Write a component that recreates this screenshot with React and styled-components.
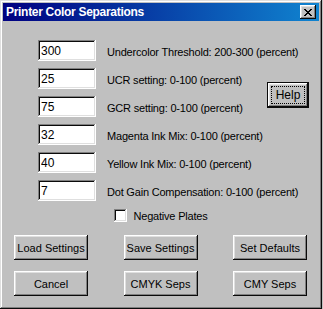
import React from 'react'
import styled, { createGlobalStyle } from 'styled-components'

const GlobalStyle = createGlobalStyle`
  html, body {
    margin: 0;
    padding: 0;
    background: #c0c0c0;
  }
  body {
    font-family: "Liberation Sans", Arial, sans-serif;
    font-size: 11px;
    letter-spacing: -0.2px;
    color: #000;
  }
`

const Window = styled.div`
  box-sizing: border-box;
  width: 322px;
  height: 309px;
  padding: 3px;
  background: #c0c0c0;
  box-shadow: inset -1px -1px #0a0a0a, inset 1px 1px #dfdfdf,
    inset -2px -2px #808080, inset 2px 2px #fff;
  display: flex;
  flex-direction: column;
`

const TitleBar = styled.div`
  height: 18px;
  display: flex;
  align-items: center;
  justify-content: space-between;
  padding: 0 3px 0 3px;
  background: linear-gradient(90deg, #000080, #1084d0);
`

const Title = styled.span`
  color: #fff;
  font-weight: bold;
  font-size: 12px;
  letter-spacing: -0.3px;
`

const CloseButton = styled.button`
  box-sizing: border-box;
  width: 16px;
  height: 14px;
  padding: 0;
  border: 0;
  background: #c0c0c0;
  box-shadow: inset -1px -1px #0a0a0a, inset 1px 1px #fff,
    inset -2px -2px #808080, inset 2px 2px #dfdfdf;
  display: flex;
  align-items: center;
  justify-content: center;
`

const Body = styled.div`
  flex: 1;
  display: flex;
  flex-direction: column;
  padding: 19px 0 0 35px;
`

const FieldGrid = styled.div`
  display: grid;
  grid-template-columns: 58px auto 1fr;
  grid-auto-rows: 21px;
  column-gap: 11px;
  row-gap: 7px;
  align-items: center;
`

const Field = styled.input`
  box-sizing: border-box;
  width: 58px;
  height: 21px;
  padding: 3px 3px 2px;
  border: 0;
  outline: none;
  background: #fff;
  font: inherit;
  font-size: 12px;
  letter-spacing: 0;
  color: #000;
  box-shadow: inset -1px -1px #fff, inset 1px 1px #808080,
    inset -2px -2px #dfdfdf, inset 2px 2px #0a0a0a;
`

const Label = styled.span`
  white-space: nowrap;
  grid-column: ${p => (p.$wide ? '2 / 4' : '2')};
  padding-top: 2px;
`

const HelpCell = styled.div`
  grid-column: 3;
  grid-row: 2 / 4;
  display: flex;
  justify-content: flex-end;
  align-items: center;
  padding: 4px 10px 0 0;
`

const Button = styled.button`
  box-sizing: border-box;
  width: ${p => p.$w || 74}px;
  height: ${p => p.$h || 25}px;
  padding: 0;
  border: 0;
  background: #c0c0c0;
  font: inherit;
  color: #000;
  white-space: nowrap;
  box-shadow: inset -1px -1px #0a0a0a, inset 1px 1px #fff,
    inset -2px -2px #808080, inset 2px 2px #dfdfdf;
`

const DefaultButton = styled(Button)`
  box-shadow: inset -1px -1px #0a0a0a, inset 1px 1px #0a0a0a,
    inset -2px -2px #0a0a0a, inset 2px 2px #fff,
    inset -3px -3px #808080, inset 3px 3px #dfdfdf;
  display: flex;
  align-items: center;
  justify-content: center;
  font-size: 12px;
`

const FocusRing = styled.span`
  box-sizing: border-box;
  width: 34px;
  height: 18px;
  display: flex;
  align-items: center;
  justify-content: center;
  border: 1px dotted #000;
`

const CheckRow = styled.label`
  display: flex;
  justify-content: center;
  align-items: center;
  gap: 6px;
  margin: 8px 0 0 -35px;
`

const CheckBox = styled.span`
  box-sizing: border-box;
  width: 13px;
  height: 13px;
  background: #fff;
  box-shadow: inset -1px -1px #fff, inset 1px 1px #808080,
    inset -2px -2px #dfdfdf, inset 2px 2px #0a0a0a;
`

const ButtonGrid = styled.div`
  display: grid;
  grid-template-columns: repeat(3, 74px);
  justify-content: space-between;
  row-gap: 11px;
  margin: 13px 12px 0 -24px;
`

const fields = [
  { value: '300', label: 'Undercolor Threshold: 200-300 (percent)', wide: true },
  { value: '25', label: 'UCR setting: 0-100 (percent)' },
  { value: '75', label: 'GCR setting: 0-100 (percent)' },
  { value: '32', label: 'Magenta Ink Mix: 0-100 (percent)', wide: true },
  { value: '40', label: 'Yellow Ink Mix: 0-100 (percent)', wide: true },
  { value: '7', label: 'Dot Gain Compensation: 0-100 (percent)', wide: true }
]

const buttons = ['Load Settings', 'Save Settings', 'Set Defaults', 'Cancel', 'CMYK Seps', 'CMY Seps']

export default function App () {
  return (
    <>
      <GlobalStyle />
      <Window>
        <TitleBar>
          <Title>Printer Color Separations</Title>
          <CloseButton aria-label="Close">
            <svg width="8" height="7" viewBox="0 0 8 7">
              <path d="M0 0h2v1h1v1h2V1h1V0h2v1H7v1H6v1H5v1h1v1h1v1h1v1H6V6H5V5H3v1H2v1H0V6h1V5h1V4h1V3H2V2H1V1H0z" fill="#000" />
            </svg>
          </CloseButton>
        </TitleBar>
        <Body>
          <FieldGrid>
            {fields.map((f, i) => (
              <React.Fragment key={i}>
                <Field defaultValue={f.value} style={{ gridRow: i + 1 }} />
                <Label $wide={f.wide} style={{ gridRow: i + 1 }}>{f.label}</Label>
              </React.Fragment>
            ))}
            <HelpCell>
              <DefaultButton $w={42} $h={26}>
                <FocusRing>Help</FocusRing>
              </DefaultButton>
            </HelpCell>
          </FieldGrid>
          <CheckRow>
            <CheckBox />
            <span>Negative Plates</span>
          </CheckRow>
          <ButtonGrid>
            {buttons.map(b => (
              <Button key={b}>{b}</Button>
            ))}
          </ButtonGrid>
        </Body>
      </Window>
    </>
  )
}
